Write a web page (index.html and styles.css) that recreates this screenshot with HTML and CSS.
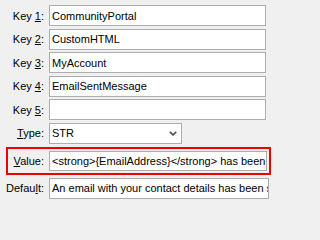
FILE: index.html
```html
<!DOCTYPE html>
<html>
<head>
<meta charset="utf-8">
<link rel="stylesheet" href="styles.css">
</head>
<body>
<div class="form">
  <div class="row"><span class="label">Key <u>1</u>:</span><span class="field">CommunityPortal</span></div>
  <div class="row"><span class="label">Key <u>2</u>:</span><span class="field">CustomHTML</span></div>
  <div class="row"><span class="label">Key <u>3</u>:</span><span class="field">MyAccount</span></div>
  <div class="row"><span class="label">Key <u>4</u>:</span><span class="field">EmailSentMessage</span></div>
  <div class="row"><span class="label">Key <u>5</u>:</span><span class="field"></span></div>
  <div class="row"><span class="label"><u>T</u>ype:</span><span class="select"><span class="select-text">STR</span><svg class="chev" width="8" height="5" viewBox="0 0 8 5"><polyline points="0.8,0.8 4,3.8 7.2,0.8" fill="none" stroke="#555" stroke-width="1.8"/></svg></span></div>
  <div class="row highlight"><span class="label label-in"><u>V</u>alue:</span><span class="field field-value">&lt;strong&gt;{EmailAddress}&lt;/strong&gt; has been sent an email with a link to reset the password.</span></div>
  <div class="row"><span class="label">Defau<u>l</u>t:</span><span class="field field-default">An email with your contact details has been sent to the address you entered.</span></div>
</div>
</body>
</html>
```
FILE: styles.css
```css
html, body {
  margin: 0;
  padding: 0;
  background: #f0f0f0;
  width: 271px;
  height: 202px;
  overflow: hidden;
}
.form {
  display: flex;
  flex-direction: column;
  gap: 2.6px;
  padding-top: 5px;
  font-family: "Liberation Sans", Arial, sans-serif;
  font-size: 11px;
  color: #000;
}
.row {
  display: flex;
  align-items: center;
  height: 21px;
}
.label {
  width: 44px;
  flex: none;
  text-align: right;
  margin-right: 5px;
  white-space: nowrap;
}
.label u {
  text-underline-offset: 1px;
}
.field {
  box-sizing: border-box;
  height: 21px;
  width: 217px;
  background: #fff;
  border: 1px solid #adadad;
  padding: 0 2px;
  display: flex;
  align-items: center;
  white-space: nowrap;
  overflow: hidden;
}
.select {
  box-sizing: border-box;
  height: 21px;
  width: 133px;
  background: #fff;
  border: 1px solid #adadad;
  padding: 0 4px 0 2px;
  display: flex;
  align-items: center;
  justify-content: space-between;
}
.chev {
  display: block;
  margin-top: 1px;
}
.highlight {
  box-sizing: border-box;
  height: 28px;
  margin-top: 0.4px;
  margin-left: 6px;
  width: 265px;
  border: 2px solid #f00000;
  padding: 2px;
}
.label-in {
  width: 34px;
}
.field-value {
  height: 20px;
  width: 218px;
}
.highlight + .row {
  margin-top: 0.4px;
}
.field-default {
  width: 220px;
}
```
